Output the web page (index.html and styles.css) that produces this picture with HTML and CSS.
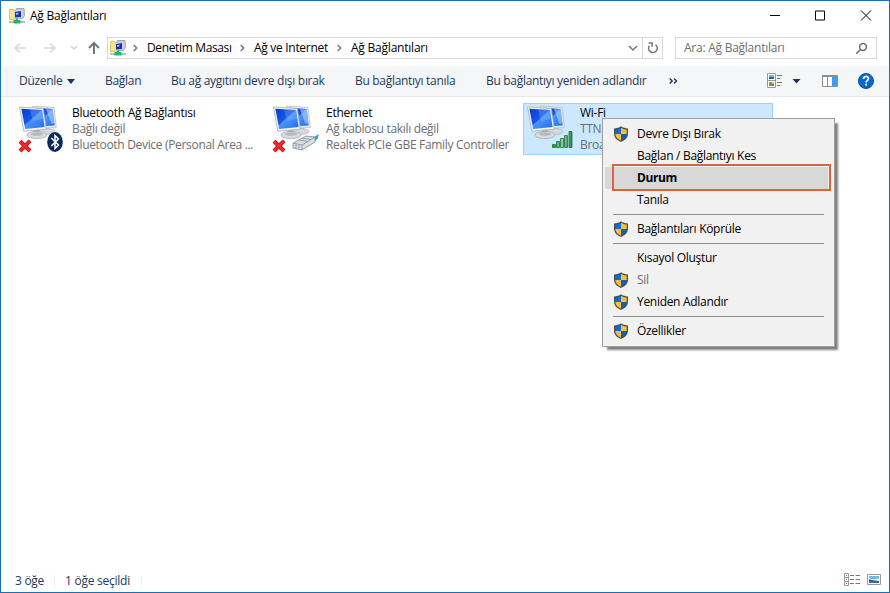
FILE: index.html
```html
<!DOCTYPE html>
<html lang="tr">
<head>
<meta charset="utf-8">
<title>Ağ Bağlantıları</title>
<link rel="stylesheet" href="styles.css">
</head>
<body>
<svg class="defs" width="0" height="0" aria-hidden="true">
  <defs>
    <linearGradient id="screen" x1="0" y1="0" x2="1" y2="1">
      <stop offset="0" stop-color="#0a3bd0"/><stop offset=".45" stop-color="#1557ea"/><stop offset=".5" stop-color="#4d94f8"/><stop offset="1" stop-color="#1d6df0"/>
    </linearGradient>
    <linearGradient id="stand" x1="0" y1="0" x2="0" y2="1">
      <stop offset="0" stop-color="#9a9fa5"/><stop offset="1" stop-color="#e4e6e8"/>
    </linearGradient>
    <linearGradient id="bar" x1="0" y1="0" x2="1" y2="0">
      <stop offset="0" stop-color="#2f8a4c"/><stop offset=".5" stop-color="#8fce9c"/><stop offset="1" stop-color="#2f8a4c"/>
    </linearGradient>
    <symbol id="shield" viewBox="0 0 14 16">
      <path d="M7 .2C5.200 1.700 2.800 2.300 0 2.400v5.200C0 11.800 2.900 14.500 7 16c4.100-1.500 7-4.200 7-8.400V2.400C11.200 2.300 8.800 1.700 7 .2z" fill="#4b4d50"/>
      <path d="M7 1.800C5.400 3 3.500 3.500 1.300 3.600V8H7z" fill="#0a6fd0"/>
      <path d="M7 1.800c1.600 1.200 3.500 1.700 5.700 1.800V8H7z" fill="#fdbd39"/>
      <path d="M1.300 8H7v6.700C3.700 13.300 1.500 11.300 1.300 8z" fill="#fdbd39"/>
      <path d="M12.700 8H7v6.700C10.300 13.300 12.500 11.300 12.700 8z" fill="#0a62bd"/>
    </symbol>
    <symbol id="net" viewBox="0 0 16 16">
      <path d="M.5 1.500h4l1 1h2v9h-7z" fill="#f9e38a" stroke="#e2c45c"/>
      <path d="M7.500.5h7.500l.5 7-2 3h-7v-8z" fill="#c9ccd3" stroke="#a4a7af"/>
      <path d="M5.500 3.500l7-1v7l-7 .5z" fill="#1d2fae" stroke="#e8ecf5" stroke-width=".8"/>
      <path d="M7 5l2.500-.5v2L7 7z" fill="#8fb4f5"/>
      <path d="M0 13h16v2H0z" fill="#b9bfc0"/>
      <path d="M7 10.500h2V12h2.500v3.500h-7V12H7z" fill="#1fb573"/>
    </symbol>
    <symbol id="monitors" viewBox="0 0 40 36">
      <ellipse cx="28" cy="26.500" rx="8" ry="3" fill="#d5d8db" stroke="#a9adb2" stroke-width=".6"/>
      <path d="M26 21h5v5h-5z" fill="url(#stand)"/>
      <path d="M13.500 1l21.500 1.500 2.300 20-19 1z" fill="#edf0f3" stroke="#b0b5ba" stroke-width=".7"/>
      <path d="M16 2.700l17.700 1.300 2 16.400-16 1z" fill="url(#screen)"/>
      <path d="M27 4l6.700.5 1.700 14-3 .3z" fill="#b9d8ff" opacity=".55"/>
      <path d="M15 25h5l1 5h-7z" fill="url(#stand)"/>
      <ellipse cx="18" cy="30" rx="10" ry="3.600" fill="#d9dcdf" stroke="#a0a5aa" stroke-width=".7"/>
      <ellipse cx="18" cy="29" rx="6" ry="1.700" fill="#b5b9be"/>
      <path d="M.5 2l23.800 1.400 3 20.800-22.500 2z" fill="#f2f4f6" stroke="#a9aeb4" stroke-width=".8"/>
      <path d="M2.400 3.700l20.700 1.200 2.500 17.200L6.200 24z" fill="url(#screen)"/>
      <path d="M11 4.200l12 .8 1.300 8.500-10.300 3z" fill="#8fc3ff" opacity=".3"/>
    </symbol>
    <symbol id="cross" viewBox="0 0 14 14">
      <path d="M2 2.300l10 9.700M12 1.800L2 12" stroke="#a80d12" stroke-width="4"/>
      <path d="M2.200 2.500l9.600 9.300M11.800 2L2.200 11.800" stroke="#f0282c" stroke-width="2.700"/>
    </symbol>
  </defs>
</svg>

<div class="window">
  <header class="titlebar">
    <svg class="app-icon" width="16" height="16"><use href="#net"/></svg>
    <span class="title">Ağ Bağlantıları</span>
    <svg class="controls" width="104" height="12" viewBox="0 0 104 12" fill="none" stroke="#000">
      <path d="M0 5.500h10M45.500 1h9v9h-9zM91 .5l10 10M101 .5l-10 10"/>
    </svg>
  </header>

  <nav class="navrow">
    <svg class="history" width="92" height="20" viewBox="0 0 92 20" fill="none" stroke-width="1.500">
      <path d="M14 5.500L9 10l5 4.500M9 10h11" stroke="#d7d7d7"/>
      <path d="M38 10h11M44 5.500l5 4.500-5 4.500" stroke="#d7d7d7"/>
      <path d="M65 8l3 3 3-3" stroke="#d2d2d2"/>
      <path d="M88 4.500V16M83 10l5-5 5 5" stroke="#777" stroke-width="2"/>
    </svg>
    <div class="address">
      <svg class="addr-icon" width="16" height="16"><use href="#net"/></svg>
      <svg class="chev" width="5" height="8" viewBox="0 0 5 8"><path d="M.7 1l3 3-3 3"/></svg>
      <span class="crumb c1">Denetim Masası</span>
      <svg class="chev" width="5" height="8" viewBox="0 0 5 8"><path d="M.7 1l3 3-3 3"/></svg>
      <span class="crumb c2">Ağ ve Internet</span>
      <svg class="chev" width="5" height="8" viewBox="0 0 5 8"><path d="M.7 1l3 3-3 3"/></svg>
      <span class="crumb c3">Ağ Bağlantıları</span>
      <svg class="drop" width="10" height="7" viewBox="0 0 10 7"><path d="M1 1l4 4 4-4"/></svg>
      <span class="refresh"><svg width="12" height="12" viewBox="0 0 12 12" fill="none" stroke="#777" stroke-width="1.600"><path d="M2.400 3.800A4.300 4.300 0 1 0 8.500 2.800M1.500 1h3.600v3.800"/></svg></span>
    </div>
    <div class="search">
      <span>Ara: Ağ Bağlantıları</span>
      <svg width="13" height="13" viewBox="0 0 13 13" fill="none" stroke="#6f6f6f" stroke-width="1.500"><circle cx="8" cy="5" r="3.400"/><path d="M5.500 7.500L1.200 11.800"/></svg>
    </div>
  </nav>

  <div class="toolbar">
    <span class="t1">Düzenle<i class="tri"></i></span>
    <span class="t2">Bağlan</span>
    <span class="t3">Bu ağ aygıtını devre dışı bırak</span>
    <span class="t4">Bu bağlantıyı tanıla</span>
    <span class="t5">Bu bağlantıyı yeniden adlandır</span>
    <svg class="more" width="9" height="6" viewBox="0 0 9 6" fill="none" stroke="#1e3261" stroke-width="1.400"><path d="M.7.500L3.200 3 .7 5.500M5 .500L7.500 3 5 5.500"/></svg>
    <svg class="tools" width="110" height="18" viewBox="0 0 110 18">
      <path d="M.5 1.500h8v14h-8zM.5 8.500h8" fill="#fff" stroke="#999"/>
      <path d="M2 3h5v2H2z" fill="#70b5ef"/><path d="M2 5h5v2H2z" fill="#236590"/>
      <path d="M2 10h3v2H2z" fill="#67ad48"/><path d="M5 10h2v2H5z" fill="#f1b94b"/><path d="M2 12h3v2H2z" fill="#d16b38"/><path d="M5 12h2v2H5z" fill="#4a8c58"/>
      <path d="M10 3.500h5M10 6.500h3M10 10.500h5M10 13.500h3" stroke="#777"/>
      <path d="M25.500 7h8l-4 4.500z" fill="#1e3261"/>
      <path d="M55.500 3.500h15v11h-15z" fill="#fff" stroke="#8e8e8e"/><path d="M55 4h16" stroke="#8e8e8e" stroke-width="2"/><path d="M60.500 5v9" stroke="#8e8e8e"/><path d="M65 5h5v9h-5z" fill="#3c9df0"/>
      <circle cx="99" cy="9" r="7.500" fill="#0a69cf" stroke="#07509f"/>
      <path d="M96.500 7c0-3.400 5-3.200 5-.4 0 2-2.400 2-2.400 4" fill="none" stroke="#fff" stroke-width="1.700"/><path d="M98.200 11.700h1.800v1.800h-1.800z" fill="#fff"/>
    </svg>
  </div>

  <main class="items">
    <div class="item">
      <svg class="pic" width="50" height="50" viewBox="0 0 50 50">
        <use href="#monitors" width="40" height="36"/>
        <use href="#cross" x="-1" y="34" width="14" height="14"/>
        <ellipse cx="36" cy="37" rx="7.800" ry="10" fill="#0b2a5c"/>
        <path d="M32.300 33l7.200 7-3.500 3.500v-13l3.500 3.500-7.200 7" fill="none" stroke="#fff" stroke-width="1.500"/>
      </svg>
      <div class="info"><p class="name">Bluetooth Ağ Bağlantısı</p><p>Bağlı değil</p><p>Bluetooth Device (Personal Area ...</p></div>
    </div>
    <div class="item">
      <svg class="pic" width="50" height="50" viewBox="0 0 50 50">
        <use href="#monitors" width="40" height="36"/>
        <use href="#cross" x="-1" y="34" width="14" height="14"/>
        <path d="M39 33l7-4-1.500 5-4 3z" fill="#2aa5dc"/>
        <path d="M20 38l13-7 9 1v5l-13 8-9-2z" fill="#d7dee6" stroke="#7d8a98" stroke-width=".8"/>
        <path d="M20 38l9 2 13-8M29 40v5M23 39v4M26 39.500v4M26 35l9 1.500M29 33l9 1.500" fill="none" stroke="#8592a0" stroke-width=".8"/>
      </svg>
      <div class="info"><p class="name">Ethernet</p><p>Ağ kablosu takılı değil</p><p>Realtek PCIe GBE Family Controller</p></div>
    </div>
    <div class="item selected">
      <svg class="pic" width="50" height="50" viewBox="0 0 50 50">
        <use href="#monitors" width="40" height="36"/>
        <g fill="url(#bar)" stroke="#1b7439" stroke-width=".8"><path d="M25.500 39.500h3v3h-3zM29.500 36.500h3v6h-3zM33.500 33.500h3v9h-3zM37.500 30.500h3v12h-3zM42 26.500h3v16h-3z"/></g>
      </svg>
      <div class="info"><p class="name">Wi-Fi</p><p>TTNET</p><p>Broadcom</p></div>
    </div>
  </main>

  <footer class="status">
    <span class="s1">3 öğe</span><span class="s2">1 öğe seçildi</span>
    <svg width="38" height="14" viewBox="0 0 38 14">
      <path d="M.5.500h4v12h-4zM.5 4.500h4M.5 8.500h4" fill="#fff" stroke="#999"/>
      <path d="M2 2h1v1H2z" fill="#4780b8"/><path d="M2 6h1v1H2z" fill="#2b93ec"/><path d="M2 10h1v1H2z" fill="#c33"/>
      <path d="M6 2.500h4M11.500 2.500h4.500M6 6.500h4M11.500 6.500h4.500M6 10.500h4M11.500 10.500h4.500" stroke="#777"/>
      <path d="M23.500 1.500h13v10h-13z" fill="#fff" stroke="#999"/>
      <path d="M25 3h10v7H25z" fill="#74b8ea"/><path d="M25 7V5l4 1.500 6-1v2.500z" fill="#e9f4fb"/><path d="M25 6l4 1.500 6 .5v2H25z" fill="#2c6175"/><path d="M25 9h10v1H25z" fill="#3976b9"/>
    </svg>
  </footer>

  <div class="menu">
    <div class="row"><svg class="shield"><use href="#shield"/></svg><span>Devre Dışı Bırak</span></div>
    <div class="row"><span>Bağlan / Bağlantıyı Kes</span></div>
    <div class="row hot"><span>Durum</span></div>
    <div class="row"><span>Tanıla</span></div>
    <hr>
    <div class="row"><svg class="shield"><use href="#shield"/></svg><span>Bağlantıları Köprüle</span></div>
    <hr>
    <div class="row"><span>Kısayol Oluştur</span></div>
    <div class="row off"><svg class="shield"><use href="#shield"/></svg><span>Sil</span></div>
    <div class="row"><svg class="shield"><use href="#shield"/></svg><span>Yeniden Adlandır</span></div>
    <hr>
    <div class="row"><svg class="shield"><use href="#shield"/></svg><span>Özellikler</span></div>
  </div>
</div>
</body>
</html>
```
FILE: styles.css
```css
*, *::before, *::after { box-sizing: border-box; }
body { margin: 0; background: #fff; font: 12px/16px "Open Sans", "Noto Sans", sans-serif; letter-spacing: -0.3px; color: #000; }
svg { flex: none; display: block; }
.defs { position: absolute; }
p { margin: 0; white-space: nowrap; }
span { white-space: nowrap; }
.window { position: relative; width: 890px; height: 593px; border: 1px solid #1a6fb5; display: flex; flex-direction: column; overflow: hidden; background: #fff; }

.titlebar { height: 30px; display: flex; align-items: center; padding: 0 13px 0 8px; }
.title { margin-left: 5px; letter-spacing: -0.25px; }
.controls { margin-left: auto; margin-right: 2px; }

.navrow { height: 35px; display: flex; align-items: center; padding-bottom: 1px; }
.history { overflow: visible; margin-left: 5px; }
.address { display: flex; align-items: center; width: 556px; height: 22px; margin-left: 9px; border: 1px solid #d9d9d9; padding-left: 2px; }
.address, .search { position: relative; }
.chev, .drop { fill: none; stroke: #777; stroke-width: 1.500; }
.chev { margin-left: 7px; }
.crumb + .chev { margin-left: 0; }
.crumb { margin-left: 9px; padding-bottom: 1px; }
.c1 { width: 93px; letter-spacing: -0.36px; }
.c2 { width: 83px; }
.c3 { letter-spacing: -0.22px; }
.drop { margin-left: auto; margin-right: 4px; }
.refresh { width: 20px; height: 20px; border-left: 1px solid #d9d9d9; display: flex; align-items: center; justify-content: center; }
.search { display: flex; align-items: center; justify-content: space-between; width: 202px; height: 22px; margin-left: 12px; padding: 0 8px; border: 1px solid #d9d9d9; color: #6d6d6d; letter-spacing: -0.25px; }

.toolbar { height: 31px; display: flex; align-items: center; background: #f5f6f7; border-bottom: 1px solid #e6e8ea; padding-left: 18px; color: #1e395b; }
.t1 { width: 86px; }
.tri { display: inline-block; margin-left: 5px; vertical-align: 1px; border: 4px solid transparent; border-top: 5px solid #1e3261; border-bottom: 0; }
.t2 { width: 66px; }
.t3 { width: 184px; }
.t4 { width: 131px; }
.t5 { width: 183px; }
.tools { margin-left: 89px; }

.items { display: flex; align-items: flex-start; padding: 6px 0 0 14px; flex: 1; gap: 4px; }
.item { display: flex; width: 250px; height: 52px; border: 1px solid transparent; padding: 1px 0 0 3px; }
.pic { margin-right: 3px; overflow: visible; }
.info { color: #6d6d6d; overflow: hidden; letter-spacing: -0.32px; }
.info .name { color: #000; letter-spacing: -0.27px; }
.selected { background: #cce8ff; border-color: #99d1ff; }

.status { height: 24px; display: flex; align-items: center; padding: 2px 7px 0 14px; color: #1e395b; }
.status span { border-right: 1px solid #eef0f4; height: 12px; line-height: 12px; }
.s1 { width: 40px; }
.s2 { width: 87px; padding-left: 10px; letter-spacing: -0.25px; }
.status svg { margin-left: auto; margin-bottom: 2px; }

.menu { position: absolute; left: 601px; top: 117px; width: 233px; height: 229px; padding: 4px 2px; background: #f1f1f1; border: 1px solid #a0a0a0; box-shadow: 4px 4px 2px -1px rgba(0,0,0,.5); }
.row { position: relative; display: flex; align-items: center; height: 22px; padding-left: 32px; }
.row .shield { width: 14px; height: 16px; margin-left: -23px; margin-right: 9px; }
.menu hr { height: 1px; border: 0; margin: 3px 8px; background: #919191; }
.hot { margin-right: 4px; background: #d8d8d8; font-weight: bold; letter-spacing: -0.4px; }
.hot::after { content: ""; position: absolute; left: 7px; top: -3px; width: 219px; height: 27px; border: 2px solid #d9653f; }
.off { color: #6d6d6d; }
```
